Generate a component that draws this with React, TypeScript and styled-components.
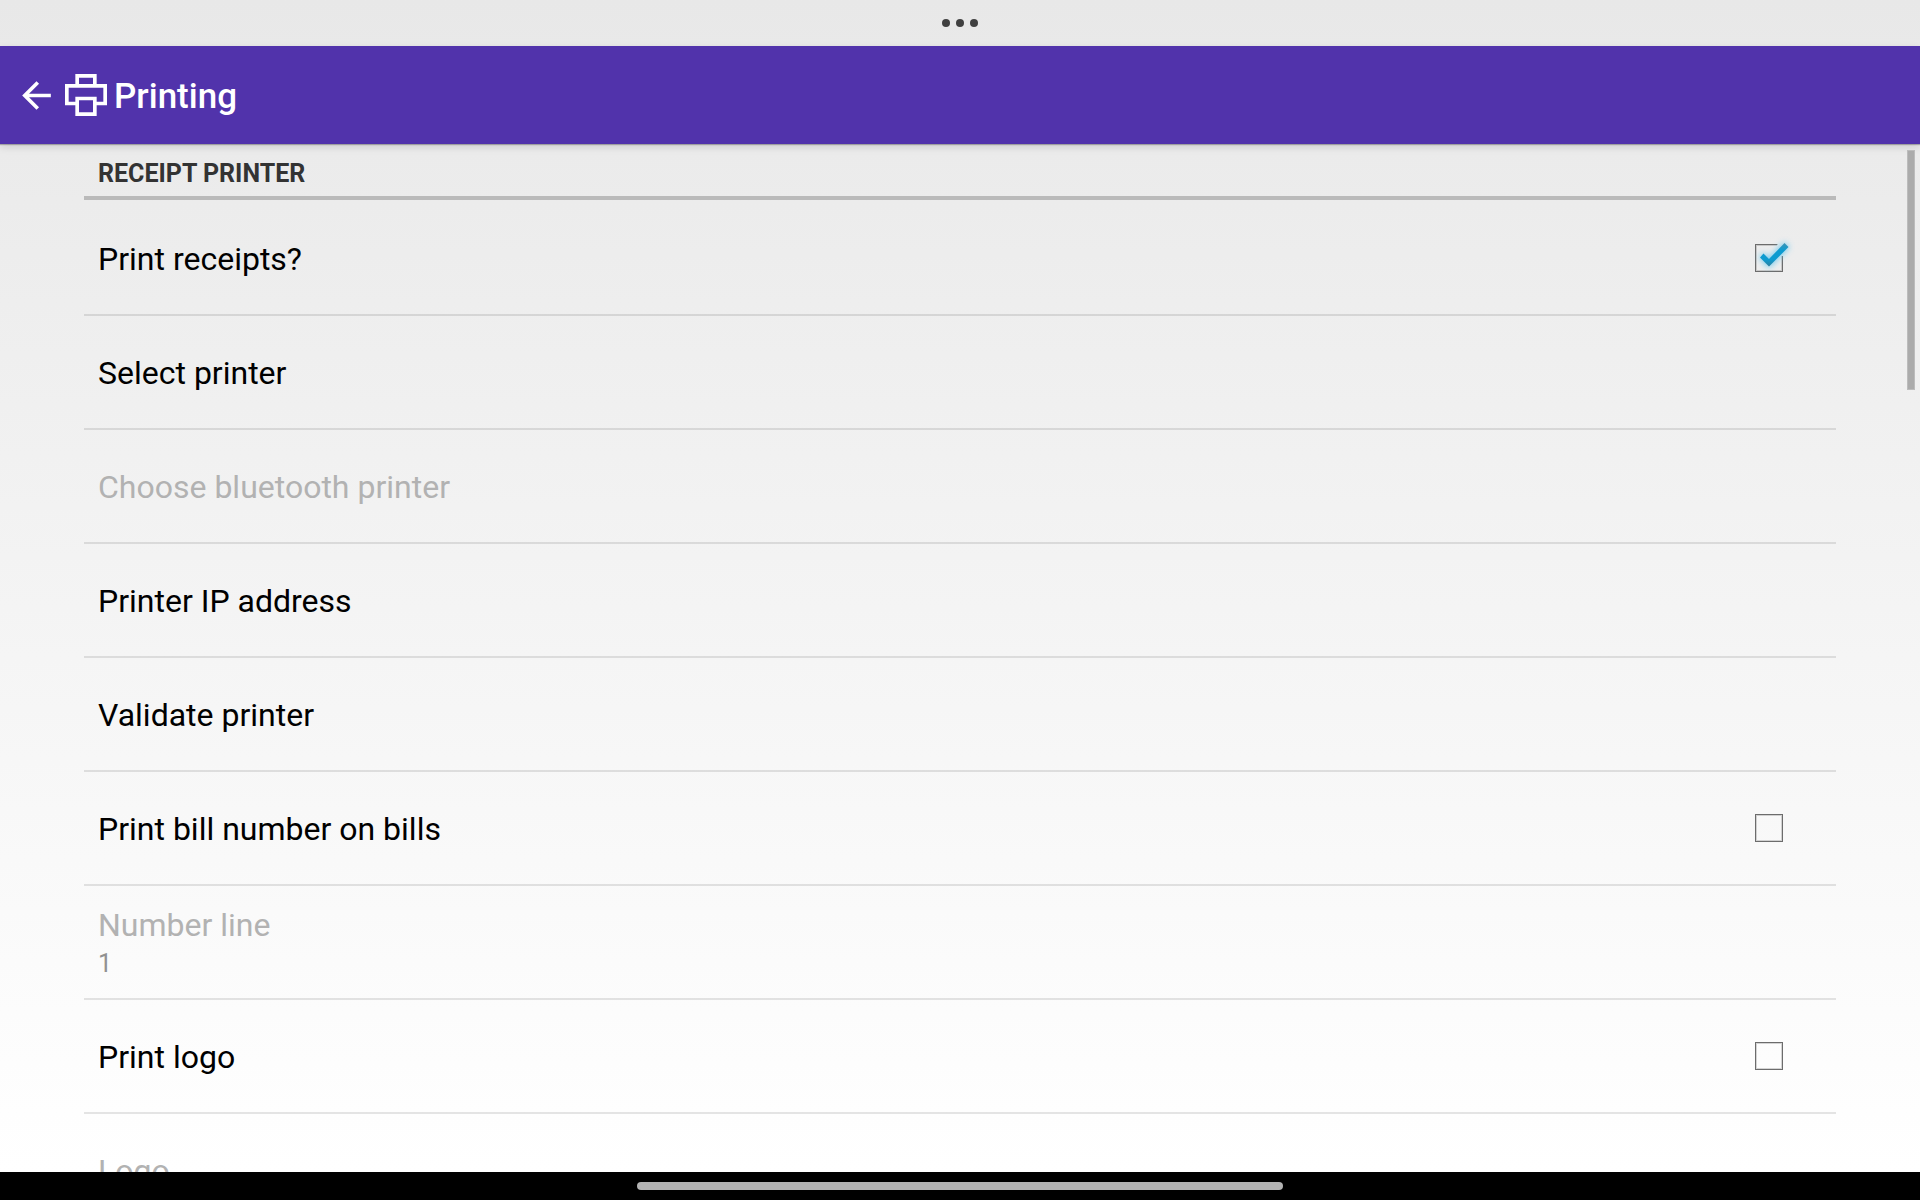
import React, { useState } from "react";
import styled, { createGlobalStyle } from "styled-components";

const GlobalStyle = createGlobalStyle`
  *, *::before, *::after { box-sizing: border-box; }
  body {
    margin: 0;
    font-family: Roboto, "Noto Sans", sans-serif;
    color: #000;
  }
`;

const Screen = styled.div`
  display: flex;
  flex-direction: column;
  height: 100vh;
  background: #000;
`;

const Window = styled.div`
  display: flex;
  flex-direction: column;
  flex: 1;
  min-height: 0;
  background: linear-gradient(#e8e8e8, #fefefe 95%, #fff);
`;

const CaptionBar = styled.div`
  display: flex;
  justify-content: center;
  align-items: center;
  gap: 6px;
  height: 46px;
  flex: none;
`;

const Dot = styled.span`
  width: 8px;
  height: 8px;
  border-radius: 50%;
  background: #404040;
`;

const AppBar = styled.header`
  display: flex;
  align-items: center;
  flex: none;
  height: 98px;
  padding: 0 15px;
  background: #5133ab;
  color: #fff;
  box-shadow: 0 1px 1px rgba(0, 0, 0, 0.25), 0 3px 8px rgba(0, 0, 0, 0.12);
`;

const BackButton = styled.button`
  display: flex;
  padding: 0;
  border: 0;
  background: none;
  color: inherit;
`;

const PrinterIcon = styled.svg`
  margin-left: 7px;
`;

const Title = styled.h1`
  margin: 0 0 0 7px;
  padding-top: 3px;
  font-size: 35px;
  line-height: 42px;
  font-weight: 500;
`;

const Content = styled.main`
  position: relative;
  flex: 1;
  min-height: 0;
  overflow: hidden;
  padding: 0 84px;
`;

const ScrollThumb = styled.div`
  position: absolute;
  top: 6px;
  right: 5px;
  width: 8px;
  height: 240px;
  border: 1px solid #bcbcbc;
  background: #ababab;
`;

const SectionTitle = styled.h2`
  margin: 0 0 2px;
  padding: 14px 14px 6px;
  border-bottom: 4px solid #bababa;
  color: #333;
  font-size: 25px;
  line-height: 32px;
  font-weight: 700;
  text-transform: uppercase;
`;

const List = styled.ul`
  margin: 0;
  padding: 0;
  list-style: none;
`;

const Item = styled.li`
  border-bottom: 2px solid rgba(0, 0, 0, 0.1);
`;

const rowStyles = `
  display: flex;
  align-items: center;
  justify-content: space-between;
  width: 100%;
  height: 112px;
  padding: 0 53px 0 14px;
`;

const ToggleRow = styled.label`
  ${rowStyles}
`;

const ActionRow = styled.button`
  ${rowStyles}
  border: 0;
  background: none;
  color: inherit;
  font: inherit;
  text-align: left;
`;

const Texts = styled.span`
  display: flex;
  flex-direction: column;
  padding-top: 2px;
`;

const Label = styled.span<{ $disabled?: boolean }>`
  font-size: 32px;
  line-height: 42px;
  color: ${(p) => (p.$disabled ? "#b2b2b2" : "#000")};
`;

const Summary = styled.span`
  font-size: 25px;
  line-height: 36px;
  color: #919191;
`;

const CheckHolder = styled.span`
  position: relative;
  display: flex;
`;

const Box = styled.input`
  appearance: none;
  width: 28px;
  height: 28px;
  margin: 0;
  border: 1px solid #6c6c6c;
  box-shadow: inset 0 0 0 1px rgba(0, 0, 0, 0.16);
`;

const CheckMark = styled.svg`
  position: absolute;
  left: -6px;
  top: -12px;
  overflow: visible;
  pointer-events: none;
`;

type Setting = {
  label: string;
  summary?: string;
  disabled?: boolean;
  toggle?: boolean;
  on?: boolean;
};

const settings: Setting[] = [
  { label: "Print receipts?", toggle: true, on: true },
  { label: "Select printer" },
  { label: "Choose bluetooth printer", disabled: true },
  { label: "Printer IP address" },
  { label: "Validate printer" },
  { label: "Print bill number on bills", toggle: true },
  { label: "Number line", summary: "1", disabled: true },
  { label: "Print logo", toggle: true },
  { label: "Logo", disabled: true },
];

const NavBar = styled.footer`
  display: flex;
  justify-content: center;
  align-items: center;
  flex: none;
  height: 28px;
`;

const HomeHandle = styled.div`
  width: 646px;
  max-width: 60%;
  height: 8px;
  border-radius: 4px;
  background: #b3b3b3;
`;

function Check() {
  return (
    <CheckMark width="48" height="48" viewBox="0 0 48 48" aria-hidden="true">
      <defs>
        <linearGradient id="tick" x1="0" y1="0" x2="0" y2="1">
          <stop offset="0" stopColor="#3d93b4" />
          <stop offset="0.3" stopColor="#0d9bd0" />
          <stop offset="0.7" stopColor="#0d9bd0" />
          <stop offset="1" stopColor="#2f7f9e" />
        </linearGradient>
        <filter id="glow" x="-50%" y="-50%" width="200%" height="200%">
          <feGaussianBlur stdDeviation="3" />
        </filter>
      </defs>
      <path d="M29 11H35V24H31L27 16Z" fill="#ececec" />
      <path
        d="M10 25L14.500 20.500L20 26L35.500 10L40.500 15L20 36Z"
        fill="#5cc4ee"
        opacity="0.85"
        filter="url(#glow)"
      />
      <path d="M11 25.500L14.500 21.500L20 27L35.500 11L39.500 15L20 34.500Z" fill="url(#tick)" />
    </CheckMark>
  );
}

function ToggleSetting({ label, on }: Setting) {
  const [checked, setChecked] = useState(!!on);
  return (
    <ToggleRow>
      <Texts>
        <Label>{label}</Label>
      </Texts>
      <CheckHolder>
        <Box
          type="checkbox"
          checked={checked}
          onChange={(e) => setChecked(e.target.checked)}
        />
        {checked && <Check />}
      </CheckHolder>
    </ToggleRow>
  );
}

function ActionSetting({ label, summary, disabled }: Setting) {
  return (
    <ActionRow type="button" disabled={disabled}>
      <Texts>
        <Label $disabled={disabled}>{label}</Label>
        {summary && <Summary>{summary}</Summary>}
      </Texts>
    </ActionRow>
  );
}

export default function App() {
  return (
    <Screen>
      <GlobalStyle />
      <Window>
        <CaptionBar>
          <Dot />
          <Dot />
          <Dot />
        </CaptionBar>
        <AppBar>
          <BackButton type="button" aria-label="Back">
            <svg width="43" height="43" viewBox="0 0 24 24" fill="currentColor">
              <path d="M20 11H7.830l5.590-5.590L12 4l-8 8 8 8 1.410-1.410L7.830 13H20v-2z" />
            </svg>
          </BackButton>
          <PrinterIcon
            width="42"
            height="42"
            viewBox="0 0 126 126"
            fill="none"
            stroke="currentColor"
            strokeWidth="11"
            aria-hidden="true"
          >
            <path d="M36.500 88.500H5.500V35.500H120.500V88.500H89.500" />
            <path d="M36.500 35.500V5.500H89.500V35.500" />
            <path d="M36.500 73.500H89.500V120.500H36.500Z" />
          </PrinterIcon>
          <Title>Printing</Title>
        </AppBar>
        <Content>
          <SectionTitle>Receipt printer</SectionTitle>
          <List>
            {settings.map((s) => (
              <Item key={s.label}>
                {s.toggle ? <ToggleSetting {...s} /> : <ActionSetting {...s} />}
              </Item>
            ))}
          </List>
          <ScrollThumb />
        </Content>
      </Window>
      <NavBar>
        <HomeHandle />
      </NavBar>
    </Screen>
  );
}
